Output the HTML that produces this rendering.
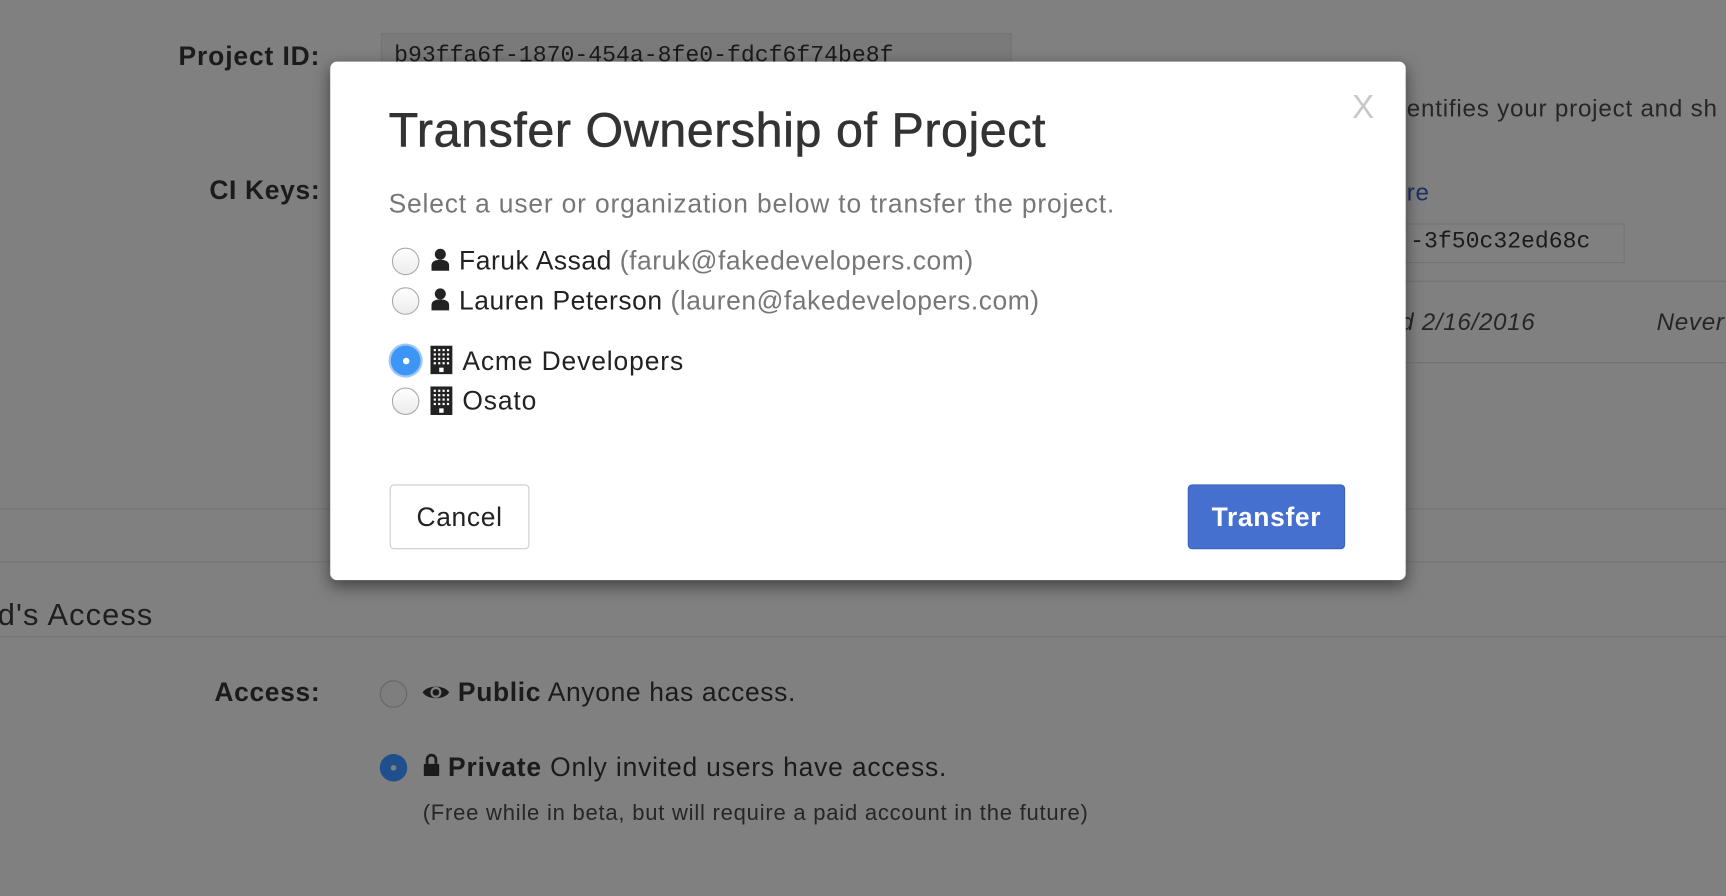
<!DOCTYPE html>
<html><head><meta charset="utf-8"><style>
html,body{margin:0;padding:0;width:1726px;height:896px;overflow:hidden;background:#808080;}
#w{position:absolute;left:0;top:0;width:1568px;height:814px;transform:scale(1.10077);transform-origin:0 0;font-family:"Liberation Sans",Arial,sans-serif;color:#1b1b1b;letter-spacing:0.6px;}
.a{position:absolute;white-space:nowrap;}
.lbl{font-weight:bold;font-size:24px;text-align:right;width:291px;left:0;}
.line{position:absolute;height:1px;background:#737373;}
.mono{font-family:"Liberation Mono",monospace;letter-spacing:0;}
#m{position:absolute;left:300px;top:56px;width:977px;height:471px;background:#fff;border-radius:6px;box-shadow:0 5px 15px rgba(0,0,0,.5);color:#333;}
.r{position:absolute;width:23px;height:23px;border:1px solid #aaa;border-radius:50%;background:linear-gradient(#fff,#ececec);}
.opt{position:absolute;left:117px;font-size:24px;color:#222;white-space:nowrap;letter-spacing:0.5px;}
.opt span{color:#777;}
</style></head><body><div id="w">
<div class="a lbl" style="top:38px;letter-spacing:0.8px">Project ID:</div>
<div class="a mono" style="left:346px;top:30px;width:573px;height:40px;border:1px solid #747474;background:#7a7a7a;box-sizing:border-box;font-size:21px;padding:9px 11px;color:#1a1a1a">b93ffa6f-1870-454a-8fe0-fdcf6f74be8f</div>
<div class="a lbl" style="top:160px">CI Keys:</div>
<div class="a" style="left:1278px;top:86px;font-size:22px;color:#262626;letter-spacing:0.7px">entifies your project and sh</div>
<div class="a" style="left:1278px;top:162px;font-size:22px;color:#1d2f66">re</div>
<div class="a mono" style="left:1270px;top:203px;width:206px;height:36px;border:1px solid #747474;box-sizing:border-box;font-size:21px;padding:5px 0 0 10px;color:#1a1a1a">-3f50c32ed68c</div>
<div class="line" style="left:1277px;top:255px;width:291px"></div>
<div class="a" style="left:1272px;top:280px;font-size:22px;font-style:italic;color:#262626">d 2/16/2016</div>
<div class="a" style="left:1505px;top:280px;font-size:22px;font-style:italic;color:#262626">Never</div>
<div class="line" style="left:1277px;top:329px;width:291px"></div>
<div class="line" style="left:0;top:462px;width:1568px"></div>
<div class="line" style="left:0;top:510px;width:1568px"></div>
<div class="a" style="left:-2px;top:543px;font-size:28px;color:#1e1e1e;letter-spacing:1px">d's Access</div>
<div class="line" style="left:0;top:578px;width:1568px"></div>
<div class="a lbl" style="top:616px">Access:</div>
<div class="r" style="left:345px;top:618px;border-color:#666;background:#7e7e7e"></div>
<svg class="a" style="left:383px;top:620px" width="26" height="18" viewBox="0 0 26 18"><path d="M1 9C5 2 21 2 25 9C21 16 5 16 1 9Z" fill="#1b1b1b"/><circle cx="13" cy="9" r="5" fill="#808080"/><circle cx="13" cy="9" r="3" fill="#1b1b1b"/></svg>
<div class="a" style="left:416px;top:616px;font-size:24px"><b>Public</b> Anyone has access.</div>
<div class="a" style="left:345px;top:685px;width:25px;height:25px;border-radius:50%;background:#1f4f8c"></div>
<div class="a" style="left:355px;top:695px;width:5px;height:5px;border-radius:50%;background:#808080"></div>
<svg class="a" style="left:384px;top:684px" width="16" height="22" viewBox="0 0 16 22"><path d="M4 10V6a4 4 0 0 1 8 0v4" stroke="#1b1b1b" stroke-width="2.5" fill="none"/><rect x="1" y="10" width="14" height="11" rx="1" fill="#1b1b1b"/></svg>
<div class="a" style="left:407px;top:684px;font-size:24px;letter-spacing:0.75px"><b>Private</b> Only invited users have access.</div>
<div class="a" style="left:384px;top:728px;font-size:20px;color:#262626;letter-spacing:0.7px">(Free while in beta, but will require a paid account in the future)</div>

<div id="m">
<div class="a" style="right:28px;top:25px;font-size:30px;color:#c8c8c8">X</div>
<div class="a" style="left:53px;top:38px;font-size:44px;color:#333;letter-spacing:0.5px;-webkit-text-stroke:0.5px #333">Transfer Ownership of Project</div>
<div class="a" style="left:53px;top:116px;font-size:24px;color:#777;letter-spacing:0.75px">Select a user or organization below to transfer the project.</div>
<div class="r" style="left:56px;top:169px"></div>
<svg class="a" style="left:91px;top:169px" width="18" height="22" viewBox="0 0 18 22"><circle cx="9" cy="6" r="5" fill="#222"/><path d="M1 21V16c0-3 3-5 8-5s8 2 8 5v5Z" fill="#222"/></svg>
<div class="opt" style="top:168px">Faruk Assad <span>(faruk@fakedevelopers.com)</span></div>
<div class="r" style="left:56px;top:205px"></div>
<svg class="a" style="left:91px;top:205px" width="18" height="22" viewBox="0 0 18 22"><circle cx="9" cy="6" r="5" fill="#222"/><path d="M1 21V16c0-3 3-5 8-5s8 2 8 5v5Z" fill="#222"/></svg>
<div class="opt" style="top:204px">Lauren Peterson <span>(lauren@fakedevelopers.com)</span></div>
<div class="a" style="left:55px;top:258px;width:27px;height:27px;border-radius:50%;background:#3d95f5;box-shadow:0 0 0 2px #9cc8f7"></div>
<div class="a" style="left:66px;top:269px;width:6px;height:6px;border-radius:50%;background:#fff"></div>
<svg class="a" style="left:91px;top:258px" width="20" height="26" viewBox="0 0 20 26"><rect x="0" y="0" width="20" height="26" fill="#222"/><g fill="#fff"><rect x="3" y="3" width="2" height="2"/><rect x="7" y="3" width="2" height="2"/><rect x="11" y="3" width="2" height="2"/><rect x="15" y="3" width="2" height="2"/><rect x="3" y="7" width="2" height="2"/><rect x="7" y="7" width="2" height="2"/><rect x="11" y="7" width="2" height="2"/><rect x="15" y="7" width="2" height="2"/><rect x="3" y="11" width="2" height="2"/><rect x="7" y="11" width="2" height="2"/><rect x="11" y="11" width="2" height="2"/><rect x="15" y="11" width="2" height="2"/><rect x="3" y="15" width="2" height="2"/><rect x="7" y="15" width="2" height="2"/><rect x="11" y="15" width="2" height="2"/><rect x="15" y="15" width="2" height="2"/><rect x="8" y="20" width="4" height="4"/></g></svg>
<div class="opt" style="left:120px;top:259px;letter-spacing:0.8px">Acme Developers</div>
<div class="r" style="left:56px;top:296px"></div>
<svg class="a" style="left:91px;top:295px" width="20" height="26" viewBox="0 0 20 26"><rect x="0" y="0" width="20" height="26" fill="#222"/><g fill="#fff"><rect x="3" y="3" width="2" height="2"/><rect x="7" y="3" width="2" height="2"/><rect x="11" y="3" width="2" height="2"/><rect x="15" y="3" width="2" height="2"/><rect x="3" y="7" width="2" height="2"/><rect x="7" y="7" width="2" height="2"/><rect x="11" y="7" width="2" height="2"/><rect x="15" y="7" width="2" height="2"/><rect x="3" y="11" width="2" height="2"/><rect x="7" y="11" width="2" height="2"/><rect x="11" y="11" width="2" height="2"/><rect x="15" y="11" width="2" height="2"/><rect x="3" y="15" width="2" height="2"/><rect x="7" y="15" width="2" height="2"/><rect x="11" y="15" width="2" height="2"/><rect x="15" y="15" width="2" height="2"/><rect x="8" y="20" width="4" height="4"/></g></svg>
<div class="opt" style="left:120px;top:295px;letter-spacing:0.8px">Osato</div>
<div class="a" style="left:54px;top:384px;width:127px;height:59px;border:1px solid #ccc;border-radius:4px;box-sizing:border-box;font-size:24px;color:#222;text-align:center;line-height:59px">Cancel</div>
<div class="a" style="left:779px;top:384px;width:143px;height:59px;border:1px solid #3a63bd;background:#4570cf;border-radius:4px;box-sizing:border-box;font-size:24px;font-weight:bold;color:#fff;text-align:center;line-height:59px">Transfer</div>
</div>
</div></body></html>
